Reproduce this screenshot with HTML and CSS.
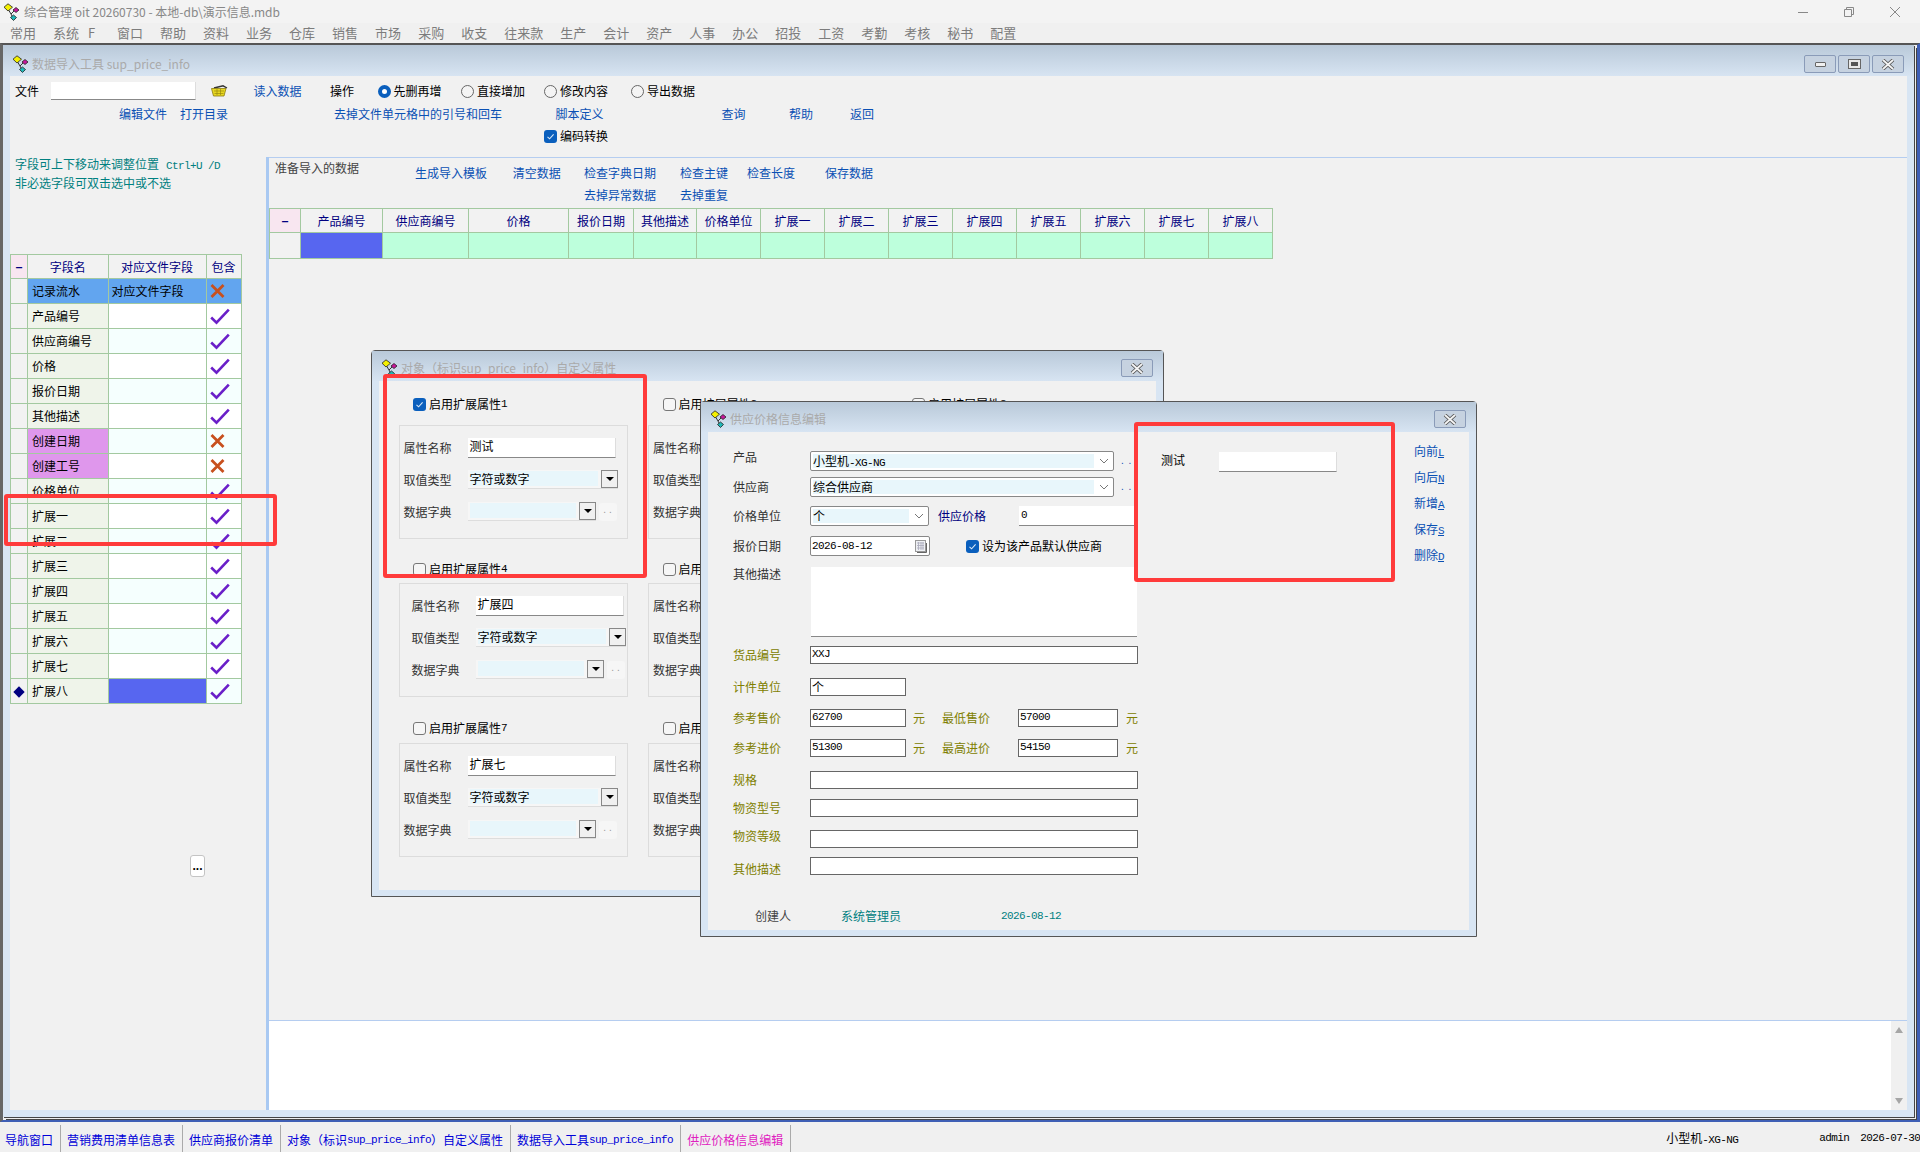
FILE: index.html
```html
<!DOCTYPE html>
<html lang="zh-CN">
<head>
  <meta charset="UTF-8" />
  <title>综合管理 oit 20260730</title>
  <link rel="stylesheet" href="styles.css">
</head>
<body>
<svg class="defs" width="0" height="0">
  <symbol id="app" viewBox="0 0 17 18">
    <path d="M5 6 L8 11 M12 7 L8 11 L10 15" fill="none" stroke="#333" stroke-width="1"/>
    <path d="M5 0.8 L9.5 4.2 L5 8 L1 4.2 Z" fill="#f5f000" stroke="#222" stroke-width="0.8"/>
    <path d="M13 4.5 L16 7 L13 9.5 L10 7 Z" fill="#c8189c" stroke="#222" stroke-width="0.8"/>
    <path d="M10.5 12 L13.5 14.5 L10.5 17.5 L7.5 14.5 Z" fill="#20b8b8" stroke="#222" stroke-width="0.8"/>
  </symbol>
  <symbol id="yes" viewBox="0 0 20 17">
    <path d="M1.2 9.5 L6.5 14.6 L18.8 1.6" fill="none" stroke="#6a1fc8" stroke-width="2.6"/>
  </symbol>
  <symbol id="no" viewBox="0 0 15 14">
    <path d="M1.5 1 L13.5 13 M13.5 1 L1.5 13" fill="none" stroke="#c8501e" stroke-width="2.8"/>
  </symbol>
  <symbol id="tick" viewBox="0 0 13 13">
    <rect width="13" height="13" rx="3" fill="#0a5fbd"/>
    <path d="M3.5 6.8 L5.6 8.8 L9.6 4.4" fill="none" stroke="#d8e8f8" stroke-width="1.1"/>
  </symbol>
  <symbol id="chev" viewBox="0 0 10 6">
    <path d="M1 1 L5 5 L9 1" fill="none" stroke="#777" stroke-width="1"/>
  </symbol>
  <symbol id="close" viewBox="0 0 14 11">
    <path d="M2 1 L12 10 M12 1 L2 10" fill="none" stroke="#555" stroke-width="3.6"/>
    <path d="M2 1 L12 10 M12 1 L2 10" fill="none" stroke="#f4f4f4" stroke-width="1.8"/>
  </symbol>
</svg>

<div class="app">
  <div class="titlebar">
    <svg class="app-icon"><use href="#app"/></svg>
    <span class="title-text">综合管理 oit 20260730 - 本地-db\演示信息.mdb</span>
    <div class="sys-btns">
      <svg width="12" height="12"><path d="M1 6.5 H11" stroke="#888" fill="none"/></svg>
      <svg width="12" height="12"><path d="M1.5 3.5 H8.5 V10.5 H1.5 Z M3.5 3 V1.5 H10.5 V8.5 H9" stroke="#888" fill="none"/></svg>
      <svg width="12" height="12"><path d="M1 1 L11 11 M11 1 L1 11" stroke="#888" fill="none"/></svg>
    </div>
  </div>

  <div class="menubar">
    <span>常用</span><span class="menu-wide">系统<i>F</i></span><span>窗口</span><span>帮助</span><span>资料</span><span>业务</span><span>仓库</span><span>销售</span><span>市场</span><span>采购</span><span>收支</span><span>往来款</span><span>生产</span><span>会计</span><span>资产</span><span>人事</span><span>办公</span><span>招投</span><span>工资</span><span>考勤</span><span>考核</span><span>秘书</span><span>配置</span>
  </div>

  <div class="mdi">
    <div class="main-win">
      <div class="win-title">
        <svg class="win-icon"><use href="#app"/></svg>
        <span class="win-name">数据导入工具 sup_price_info</span>
        <div class="win-btns">
          <span class="win-btn"><i class="g-min"></i></span>
          <span class="win-btn"><i class="g-max"></i></span>
          <span class="win-btn"><svg width="14" height="11"><use href="#close"/></svg></span>
        </div>
      </div>

      <div class="main-body">
        <div class="toolbar">
          <div class="tool-row row-file">
            <span>文件</span>
            <span class="input file-input"></span>
            <svg class="basket" width="17" height="12" viewBox="0 0 17 12">
              <path d="M3 3 L12 0.8 L16 3" fill="none" stroke="#333" stroke-width="1.4"/>
              <path d="M0.5 3.5 H15 L13 11 H2.5 Z" fill="#e8d820" stroke="#8a7a10" stroke-width="0.8"/>
              <path d="M3 6 H13 M3.5 8.5 H12.5 M6 4 V10 M9.500 4 V10" stroke="#9a8a10" stroke-width="0.7"/>
            </svg>
            <a class="link">读入数据</a>
            <span>操作</span>
            <label class="opt"><i class="radio on"></i>先删再增</label>
            <label class="opt"><i class="radio"></i>直接增加</label>
            <label class="opt"><i class="radio"></i>修改内容</label>
            <label class="opt"><i class="radio"></i>导出数据</label>
          </div>
          <div class="tool-row row-links">
            <a class="link">编辑文件</a>
            <a class="link">打开目录</a>
            <a class="link">去掉文件单元格中的引号和回车</a>
            <a class="link">脚本定义</a>
            <a class="link">查询</a>
            <a class="link">帮助</a>
            <a class="link">返回</a>
          </div>
          <div class="tool-row row-code">
            <label class="opt"><svg class="cb"><use href="#tick"/></svg>编码转换</label>
          </div>
        </div>

        <div class="panes">
          <div class="left-pane">
            <p class="note">字段可上下移动来调整位置<span class="en note-keys">Ctrl+U /D</span></p>
            <p class="note">非必选字段可双击选中或不选</p>
            <table class="grid field-grid">
              <tr class="head"><th class="corner">−</th><th>字段名</th><th>对应文件字段</th><th>包含</th></tr>
              <tr class="sel"><td class="mark"></td><td class="name">记录流水</td><td>对应文件字段</td><td class="flag"><svg width="15" height="14"><use href="#no"/></svg></td></tr>
              <tr><td class="mark"></td><td class="name">产品编号</td><td></td><td class="flag"><svg width="20" height="17"><use href="#yes"/></svg></td></tr>
              <tr class="alt"><td class="mark"></td><td class="name">供应商编号</td><td></td><td class="flag"><svg width="20" height="17"><use href="#yes"/></svg></td></tr>
              <tr><td class="mark"></td><td class="name">价格</td><td></td><td class="flag"><svg width="20" height="17"><use href="#yes"/></svg></td></tr>
              <tr class="alt"><td class="mark"></td><td class="name">报价日期</td><td></td><td class="flag"><svg width="20" height="17"><use href="#yes"/></svg></td></tr>
              <tr><td class="mark"></td><td class="name">其他描述</td><td></td><td class="flag"><svg width="20" height="17"><use href="#yes"/></svg></td></tr>
              <tr class="alt"><td class="mark"></td><td class="name sys">创建日期</td><td></td><td class="flag"><svg width="15" height="14"><use href="#no"/></svg></td></tr>
              <tr><td class="mark"></td><td class="name sys">创建工号</td><td></td><td class="flag"><svg width="15" height="14"><use href="#no"/></svg></td></tr>
              <tr class="alt"><td class="mark"></td><td class="name">价格单位</td><td></td><td class="flag"><svg width="20" height="17"><use href="#yes"/></svg></td></tr>
              <tr><td class="mark"></td><td class="name">扩展一</td><td></td><td class="flag"><svg width="20" height="17"><use href="#yes"/></svg></td></tr>
              <tr class="alt"><td class="mark"></td><td class="name">扩展二</td><td></td><td class="flag"><svg width="20" height="17"><use href="#yes"/></svg></td></tr>
              <tr><td class="mark"></td><td class="name">扩展三</td><td></td><td class="flag"><svg width="20" height="17"><use href="#yes"/></svg></td></tr>
              <tr class="alt"><td class="mark"></td><td class="name">扩展四</td><td></td><td class="flag"><svg width="20" height="17"><use href="#yes"/></svg></td></tr>
              <tr><td class="mark"></td><td class="name">扩展五</td><td></td><td class="flag"><svg width="20" height="17"><use href="#yes"/></svg></td></tr>
              <tr class="alt"><td class="mark"></td><td class="name">扩展六</td><td></td><td class="flag"><svg width="20" height="17"><use href="#yes"/></svg></td></tr>
              <tr><td class="mark"></td><td class="name">扩展七</td><td></td><td class="flag"><svg width="20" height="17"><use href="#yes"/></svg></td></tr>
              <tr class="alt"><td class="mark"><i class="diamond"></i></td><td class="name">扩展八</td><td class="cur"></td><td class="flag"><svg width="20" height="17"><use href="#yes"/></svg></td></tr>
            </table>
            <button class="more-btn">...</button>
          </div>

          <div class="right-pane">
            <div class="import-area">
              <div class="import-head">
                <span class="import-title">准备导入的数据</span>
                <div class="import-links">
                  <a class="link">生成导入模板</a>
                  <a class="link">清空数据</a>
                  <a class="link">检查字典日期</a>
                  <a class="link">检查主键</a>
                  <a class="link">检查长度</a>
                  <a class="link">保存数据</a>
                  <span></span><span></span>
                  <a class="link">去掉异常数据</a>
                  <a class="link">去掉重复</a>
                </div>
              </div>
              <table class="grid data-grid">
                <tr class="head"><th class="corner">−</th><th>产品编号</th><th>供应商编号</th><th>价格</th><th>报价日期</th><th>其他描述</th><th>价格单位</th><th>扩展一</th><th>扩展二</th><th>扩展三</th><th>扩展四</th><th>扩展五</th><th>扩展六</th><th>扩展七</th><th>扩展八</th></tr>
                <tr class="new-row"><td class="mark"></td><td class="cur"></td><td></td><td></td><td></td><td></td><td></td><td></td><td></td><td></td><td></td><td></td><td></td><td></td><td></td></tr>
              </table>
            </div>
            <div class="log-box">
              <div class="scrollbar"><i class="sb-up"></i><i class="sb-down"></i></div>
            </div>
          </div>
        </div>
      </div>
    </div>
  </div>

  <div class="taskbar">
    <span class="task">导航窗口</span>
    <span class="task">营销费用清单信息表</span>
    <span class="task">供应商报价清单</span>
    <span class="task">对象（标识<span class="en">sup_price_info</span>）自定义属性</span>
    <span class="task">数据导入工具<span class="en">sup_price_info</span></span>
    <span class="task task-on">供应价格信息编辑</span>
    <span class="status status-host">小型机<span class="en">-XG-NG</span></span>
    <span class="status en status-user">admin</span>
    <span class="status en status-date">2026-07-30</span>
  </div>

  <!-- 自定义属性窗口 -->
  <div class="win attr-win">
    <div class="win-title">
      <svg class="win-icon"><use href="#app"/></svg>
      <span class="win-name">对象（标识sup_price_info）自定义属性</span>
      <div class="win-btns"><span class="win-btn"><svg width="14" height="11"><use href="#close"/></svg></span></div>
    </div>
    <div class="attr-body">
      <div class="attr r1">
        <label class="attr-check"><svg class="cb"><use href="#tick"/></svg>启用扩展属性<span class="en">1</span></label>
        <div class="attr-box">
          <div class="attr-line"><span class="attr-label">属性名称</span><span class="input attr-input">测试</span></div>
          <div class="attr-line"><span class="attr-label">取值类型</span><span class="drop drop-long"><b>字符或数字</b><i class="arrow"></i></span></div>
          <div class="attr-line"><span class="attr-label">数据字典</span><span class="drop drop-short"><b></b><i class="arrow"></i></span><span class="dots">. .</span></div>
        </div>
      </div>
      <div class="attr r1">
        <label class="attr-check"><i class="cb-off"></i>启用扩展属性<span class="en">2</span></label>
        <div class="attr-box">
          <div class="attr-line"><span class="attr-label">属性名称</span><span class="input attr-input">扩展二</span></div>
          <div class="attr-line"><span class="attr-label">取值类型</span><span class="drop drop-long"><b>字符或数字</b><i class="arrow"></i></span></div>
          <div class="attr-line"><span class="attr-label">数据字典</span><span class="drop drop-short"><b></b><i class="arrow"></i></span><span class="dots">. .</span></div>
        </div>
      </div>
      <div class="attr r1">
        <label class="attr-check"><i class="cb-off"></i>启用扩展属性<span class="en">3</span></label>
      </div>
      <div class="attr r2">
        <label class="attr-check"><i class="cb-off"></i>启用扩展属性<span class="en">4</span></label>
        <div class="attr-box attr-shift">
          <div class="attr-line"><span class="attr-label">属性名称</span><span class="input attr-input">扩展四</span></div>
          <div class="attr-line"><span class="attr-label">取值类型</span><span class="drop drop-long"><b>字符或数字</b><i class="arrow"></i></span></div>
          <div class="attr-line"><span class="attr-label">数据字典</span><span class="drop drop-short"><b></b><i class="arrow"></i></span><span class="dots">. .</span></div>
        </div>
      </div>
      <div class="attr r2">
        <label class="attr-check"><i class="cb-off"></i>启用扩展属性<span class="en">5</span></label>
        <div class="attr-box">
          <div class="attr-line"><span class="attr-label">属性名称</span><span class="input attr-input">扩展五</span></div>
          <div class="attr-line"><span class="attr-label">取值类型</span><span class="drop drop-long"><b>字符或数字</b><i class="arrow"></i></span></div>
          <div class="attr-line"><span class="attr-label">数据字典</span><span class="drop drop-short"><b></b><i class="arrow"></i></span><span class="dots">. .</span></div>
        </div>
      </div>
      <div class="attr r2"></div>
      <div class="attr r3">
        <label class="attr-check"><i class="cb-off"></i>启用扩展属性<span class="en">7</span></label>
        <div class="attr-box">
          <div class="attr-line"><span class="attr-label">属性名称</span><span class="input attr-input">扩展七</span></div>
          <div class="attr-line"><span class="attr-label">取值类型</span><span class="drop drop-long"><b>字符或数字</b><i class="arrow"></i></span></div>
          <div class="attr-line"><span class="attr-label">数据字典</span><span class="drop drop-short"><b></b><i class="arrow"></i></span><span class="dots">. .</span></div>
        </div>
      </div>
      <div class="attr r3">
        <label class="attr-check"><i class="cb-off"></i>启用扩展属性<span class="en">8</span></label>
        <div class="attr-box">
          <div class="attr-line"><span class="attr-label">属性名称</span><span class="input attr-input">扩展八</span></div>
          <div class="attr-line"><span class="attr-label">取值类型</span><span class="drop drop-long"><b>字符或数字</b><i class="arrow"></i></span></div>
          <div class="attr-line"><span class="attr-label">数据字典</span><span class="drop drop-short"><b></b><i class="arrow"></i></span><span class="dots">. .</span></div>
        </div>
      </div>
    </div>
  </div>

  <!-- 供应价格信息编辑窗口 -->
  <div class="win edit-win">
    <div class="win-title">
      <svg class="win-icon"><use href="#app"/></svg>
      <span class="win-name">供应价格信息编辑</span>
      <div class="win-btns"><span class="win-btn"><svg width="14" height="11"><use href="#close"/></svg></span></div>
    </div>
    <div class="edit-body">
      <div class="edit-form">
        <div class="f-row">
          <span class="f-label lift">产品</span>
          <span class="pick pick-long"><b>小型机<span class="en">-XG-NG</span></b><svg width="10" height="6"><use href="#chev"/></svg></span>
          <span class="more-dots">. .</span>
        </div>
        <div class="f-row mt6">
          <span class="f-label">供应商</span>
          <span class="pick pick-long"><b>综合供应商</b><svg width="10" height="6"><use href="#chev"/></svg></span>
          <span class="more-dots">. .</span>
        </div>
        <div class="f-row mt9">
          <span class="f-label">价格单位</span>
          <span class="pick pick-unit"><b>个</b><svg width="10" height="6"><use href="#chev"/></svg></span>
          <span class="navy price-label">供应价格</span>
          <span class="input price-input en">0</span>
        </div>
        <div class="f-row mt10">
          <span class="f-label">报价日期</span>
          <span class="date-box en">2026-08-12
            <svg width="12" height="13" viewBox="0 0 12 13"><rect x="0.5" y="0.5" width="10" height="11" fill="#eef0f4" stroke="#999"/><path d="M2 3 H9 M2 5.500 H9 M2 8 H9 M3.500 2 V10 M6 2 V10 M8 2 V10" stroke="#aab" stroke-width="0.8"/><path d="M11.500 3 V12.500 H2" fill="none" stroke="#666"/></svg>
          </span>
          <label class="opt default-opt"><svg class="cb"><use href="#tick"/></svg>设为该产品默认供应商</label>
        </div>
        <div class="f-row f-top mt11">
          <span class="f-label">其他描述</span>
          <span class="memo"></span>
        </div>
        <div class="f-row olive mt9">
          <span class="f-label">货品编号</span><span class="box box-full en">XXJ</span>
        </div>
        <div class="f-row olive mt14">
          <span class="f-label">计件单位</span><span class="box box-half">个</span>
        </div>
        <div class="f-row olive mt13">
          <span class="f-label">参考售价</span><span class="box box-half en">62700</span>
          <span class="yuan">元</span><span class="f-label2">最低售价</span>
          <span class="box box-price en">57000</span><span class="yuan2">元</span>
        </div>
        <div class="f-row olive mt12">
          <span class="f-label">参考进价</span><span class="box box-half en">51300</span>
          <span class="yuan">元</span><span class="f-label2">最高进价</span>
          <span class="box box-price en">54150</span><span class="yuan2">元</span>
        </div>
        <div class="f-row olive mt14">
          <span class="f-label">规格</span><span class="box box-full"></span>
        </div>
        <div class="f-row olive mt10">
          <span class="f-label">物资型号</span><span class="box box-full"></span>
        </div>
        <div class="f-row olive mt13">
          <span class="f-label lift-small">物资等级</span><span class="box box-full"></span>
        </div>
        <div class="f-row olive mt9">
          <span class="f-label sink">其他描述</span><span class="box box-full"></span>
        </div>
        <div class="creator-row">
          <span class="creator-label">创建人</span>
          <span class="teal creator-name">系统管理员</span>
          <span class="teal en">2026-08-12</span>
        </div>
      </div>
      <div class="custom-fields">
        <span class="custom-label">测试</span>
        <span class="input custom-input"></span>
      </div>
      <div class="nav-links">
        <a class="link">向前<u class="en">L</u></a>
        <a class="link">向后<u class="en">N</u></a>
        <a class="link">新增<u class="en">A</u></a>
        <a class="link">保存<u class="en">S</u></a>
        <a class="link">删除<u class="en">D</u></a>
      </div>
    </div>
  </div>

  <div class="mark-box mark-field"></div>
  <div class="mark-box mark-attr"></div>
  <div class="mark-box mark-custom"></div>
</div>
</body>
</html>
```

FILE: styles.css
```css
* {
  box-sizing: border-box;
}
html, body {
  margin: 0;
  padding: 0;
}
body {
  font-family: "Noto Sans CJK SC", "Liberation Sans", sans-serif;
  font-size: 12px;
  line-height: 14px;
  color: #000;
  background: #f0f0f0;
}
.defs {
  position: absolute;
}
.en {
  font-family: "Liberation Mono", "Noto Sans CJK SC", monospace;
  font-size: 11px;
  letter-spacing: -0.6px;
}
i, b {
  font-style: normal;
  font-weight: normal;
}
a.link {
  color: #0a50b4;
  white-space: nowrap;
}
.navy { color: #000080; }
.teal { color: #008080; }
.olive { color: #808000; }

.app {
  position: relative;
  width: 1920px;
  height: 1152px;
  overflow: hidden;
  display: flex;
  flex-direction: column;
}

/* title + menu */
.titlebar {
  height: 23px;
  background: #f3f3f3;
  display: flex;
  align-items: center;
  padding-left: 3px;
  color: #888;
}
.app-icon {
  width: 17px;
  height: 18px;
  margin-right: 4px;
}
.title-text {
  font-size: 12px;
}
.sys-btns {
  margin-left: auto;
  display: flex;
  gap: 34px;
  padding-right: 19px;
}
.menubar {
  height: 20px;
  background: #f0f0f0;
  display: flex;
  gap: 17px;
  align-items: center;
  padding-left: 10px;
  font-size: 13px;
  color: #7c7c7c;
}
.menu-wide {
  width: 47px;
}
.menu-wide i {
  margin-left: 9px;
}

/* mdi area */
.mdi {
  height: 79px;
  flex: 1;
  border-top: 2px solid #555;
  border-left: 3px solid #666;
  border-right: 3px solid #3f5fb5;
  border-bottom: 2px solid #3f5fb5;
  display: flex;
}
.main-win {
  flex: 1;
  display: flex;
  flex-direction: column;
  background: #d8e5f3;
  padding: 0 7px 7px 7px;
  margin: 0 3px 3px 0;
  box-shadow: 1px 1px 0 #444, 2px 2px 0 #eee, 3px 3px 0 #444;
}
.main-body {
  flex: 1;
  display: flex;
  flex-direction: column;
  background: #f1f1f1;
}
.win-title {
  height: 31px;
  margin: 0 -7px;
  background: linear-gradient(#b9c9d9, #d7e4f2);
  display: flex;
  align-items: center;
  padding: 7px 0 0 9px;
  color: #aaa;
  flex: none;
}
.win .win-title {
  height: 30px;
  padding-top: 4px;
}
.win-icon {
  width: 17px;
  height: 18px;
  margin-right: 3px;
}
.win-btns {
  margin-left: auto;
  display: flex;
  gap: 2px;
  padding-right: 10px;
}
.win-btn {
  width: 32px;
  height: 18px;
  border: 1px solid #8a9bb8;
  border-radius: 2px;
  background: #c6d2e0;
  display: flex;
  align-items: center;
  justify-content: center;
}
.g-min {
  width: 11px;
  height: 5px;
  background: #f0f0f0;
  border: 1px solid #666;
  border-radius: 1px;
}
.g-max {
  width: 11px;
  height: 8px;
  background: #555;
  border: 2px solid #e8e8e8;
  outline: 1px solid #666;
}

/* toolbar */
.toolbar {
  height: 81px;
  flex: none;
  padding-left: 5px;
}
.tool-row {
  display: grid;
  align-items: center;
}
.row-file {
  margin-top: 6px;
  height: 18px;
  grid-template-columns: 36px 145px 57.5px 76.5px 47.5px 83.5px 83px 87px auto;
}
.file-input {
  height: 18px;
}
.basket {
  margin-left: 15px;
}
.row-links {
  margin-top: 5px;
  height: 18px;
  margin-left: 104px;
  grid-template-columns: 61px 154px 221.500px 166px 67.400px 61px auto;
}
.row-code {
  margin-top: 5px;
  height: 16px;
  margin-left: 529px;
}
.opt {
  display: flex;
  align-items: center;
  gap: 3px;
  white-space: nowrap;
}
.radio {
  width: 13px;
  height: 13px;
  border-radius: 50%;
  border: 1px solid #666;
  background: #f4f4f4;
}
.radio.on {
  border: 4px solid #0a5fbd;
  background: #fff;
}
.cb {
  width: 13px;
  height: 13px;
  flex: none;
}
.cb-off {
  width: 13px;
  height: 13px;
  flex: none;
  border: 1px solid #777;
  border-radius: 3px;
  background: #f6f6f6;
}
.input {
  display: block;
  background: #fff;
  border-bottom: 1px solid #888;
  border-right: 1px solid #ddd;
  white-space: nowrap;
}

/* panes */
.panes {
  flex: 1;
  display: flex;
  min-height: 0;
}
.left-pane {
  width: 256px;
  flex: none;
}
.note {
  margin: 0 0 2px 5px;
  height: 17px;
  color: #008080;
}
.note-keys {
  margin-left: 7px;
}
.grid {
  border-collapse: collapse;
  table-layout: fixed;
}
.grid th, .grid td {
  border: 1px solid #a3c9a0;
  padding: 0;
  height: 25px;
  font-weight: normal;
}
.grid th {
  color: #000080;
  background: #f2f2f2;
  text-align: center;
  height: 24px;
}
.grid th.corner {
  background: #f8e6f0;
  font-weight: bold;
}
.field-grid {
  margin-top: 61px;
  width: 230.500px;
}
.field-grid th:nth-child(1) { width: 17px; }
.field-grid th:nth-child(2) { width: 80.500px; }
.field-grid th:nth-child(3) { width: 98px; }
.field-grid th:nth-child(4) { width: 35px; }
.field-grid td {
  background: #fff;
  padding-left: 3px;
}
.field-grid tr.alt td {
  background: #f5fffe;
}
.grid td.mark, .field-grid tr.alt td.mark {
  background: #f2f2f2;
  padding: 0;
  text-align: center;
}
.field-grid td.name, .field-grid tr.alt td.name {
  background: #eff4ea;
  padding-left: 4px;
}
.field-grid td.name.sys, .field-grid tr.alt td.name.sys {
  background: #df97ec;
}
.field-grid tr.sel td, .field-grid tr.sel td.name {
  background: #62a5ef;
}
.field-grid tr.sel td.mark {
  background: #f2f2f2;
}
.grid td.cur, .field-grid tr.alt td.cur {
  background: #5766f0;
}
.field-grid td.flag, .field-grid tr.alt td.flag, .field-grid tr.sel td.flag {
  padding: 0 0 0 3px;
  text-align: left;
  line-height: 0;
}
.flag svg {
  vertical-align: middle;
}
.diamond {
  display: inline-block;
  width: 8px;
  height: 8px;
  background: #000080;
  transform: rotate(45deg);
}
.more-btn {
  display: block;
  margin: 151px 0 0 180px;
  width: 15px;
  height: 22px;
  padding: 0;
  border: 1px solid #c4c4c4;
  border-radius: 3px;
  background: #fff;
  font-family: "Liberation Sans", sans-serif;
  font-size: 12px;
  font-weight: bold;
  line-height: 12px;
}

.right-pane {
  flex: 1;
  display: flex;
  flex-direction: column;
  margin-top: 0;
  border-left: 3px solid #a9c9f2;
  min-width: 0;
}
.import-area {
  flex: 1;
  border-top: 1px solid #b5cdf0;
  border-bottom: 1px solid #b5cdf0;
}
.import-head {
  height: 50px;
  display: flex;
  padding-left: 6px;
}
.import-title {
  width: 140px;
  flex: none;
  color: #444;
  padding-top: 3px;
}
.import-links {
  display: grid;
  grid-template-columns: 97.700px 71.300px 96px 67px 78px auto;
  grid-auto-rows: 22px;
  align-items: center;
  margin-top: 4px;
}
.data-grid {
  width: 1003px;
}
.data-grid th:nth-child(1) { width: 31px; }
.data-grid th:nth-child(2) { width: 82px; }
.data-grid th:nth-child(3) { width: 86px; }
.data-grid th:nth-child(4) { width: 100px; }
.data-grid th:nth-child(5) { width: 65px; }
.data-grid th:nth-child(6) { width: 63px; }
.data-grid th:nth-child(n+7) { width: 64px; }
.data-grid td {
  background: #bdffdc;
  height: 26px;
}
.data-grid td.mark {
  background: #f2f2f2;
}
.log-box {
  height: 89px;
  flex: none;
  background: #fff;
  display: flex;
  justify-content: flex-end;
}
.scrollbar {
  width: 16px;
  background: #f0f0f0;
  display: flex;
  flex-direction: column;
  justify-content: space-between;
  align-items: center;
  padding: 6px 0;
}
.sb-up {
  width: 8px;
  border: solid transparent;
  border-width: 0 4px 6px;
  border-bottom-color: #a6a6a6;
}
.sb-down {
  width: 8px;
  border: solid transparent;
  border-width: 6px 4px 0;
  border-top-color: #a6a6a6;
}

/* taskbar */
.taskbar {
  height: 30px;
  flex: none;
  display: flex;
  align-items: flex-end;
  color: #0000d8;
}
.task {
  height: 27px;
  padding: 3px 7px 0 6px;
  border-right: 1px solid #aaa;
  white-space: nowrap;
  display: flex;
  align-items: center;
}
.task:first-child {
  padding-left: 5px;
}
.task-on {
  color: #e020c0;
}
.status {
  height: 27px;
  padding-top: 6px;
  color: #000;
  white-space: nowrap;
}
.status-host {
  margin-left: 875px;
}
.status-user {
  margin-left: 81px;
}
.status-date {
  margin-left: 11px;
}

/* floating windows */
.win {
  position: absolute;
  display: flex;
  flex-direction: column;
  background: #d8e5f3;
  border: 1px solid #555;
  border-radius: 4px 4px 0 0;
  padding: 0 7px 6px 7px;
}
.attr-win {
  left: 371px;
  top: 350px;
  width: 793px;
  height: 547px;
}
.edit-win {
  left: 700px;
  top: 401px;
  width: 777px;
  height: 536px;
}

.attr-body {
  flex: 1;
  min-height: 0;
  background: #f1f1f1;
  padding: 16px 0 0 19.500px;
  display: grid;
  grid-template-columns: repeat(3, 249.500px);
  grid-template-rows: 142px 135px 137px;
  row-gap: 23px;
}
.attr-check {
  display: flex;
  align-items: center;
  height: 14px;
  margin-left: 14.500px;
  white-space: nowrap;
}
.attr-check .cb, .attr-check .cb-off {
  margin-right: 3px;
}
.r1 .attr-check { margin-bottom: 14px; }
.r2 .attr-check { margin-bottom: 7px; }
.r3 { padding-top: 1px; }
.r3 .attr-check { margin-bottom: 8px; }
.attr-box {
  width: 229px;
  height: 114px;
  border: 1px solid #dcdcdc;
  padding: 12px 0 0 4px;
  display: flex;
  flex-direction: column;
  gap: 13px;
}
.attr-shift {
  padding-left: 12px;
}
.attr-line {
  display: flex;
  align-items: center;
  height: 19px;
}
.attr-label {
  width: 64px;
  flex: none;
  color: #333;
  white-space: nowrap;
}
.attr-input {
  width: 148px;
  height: 20px;
  padding: 1px 2px;
}
.drop {
  display: flex;
  height: 19px;
  background: #f6f6f6;
  border-bottom: 1px solid #ddd;
}
.drop b {
  flex: 1;
  background: #e8f6fb;
  margin: 1px 3px 2px 2px;
  line-height: 15px;
}
.drop-long {
  width: 150px;
}
.drop-short {
  width: 128px;
}
.arrow {
  position: relative;
  width: 17px;
  flex: none;
  border: 1px solid #888;
  background: #f0f0f0;
}
.arrow::after {
  content: "";
  position: absolute;
  left: 4px;
  top: 6px;
  border: solid transparent;
  border-width: 4px 4px 0;
  border-top-color: #000;
}
.dots {
  width: 18px;
  height: 18px;
  margin-left: 3px;
  border-radius: 3px;
  background: #f6f6f6;
  color: #999;
  font-family: "Liberation Sans", sans-serif;
  font-size: 10px;
  text-align: center;
}

.edit-body {
  flex: 1;
  min-height: 0;
  background: #f1f1f1;
  display: flex;
  margin-right: 0;
}
.edit-form {
  width: 405px;
  margin-left: 25px;
  padding-top: 19px;
  flex: none;
}
.f-row {
  display: flex;
  align-items: center;
  white-space: nowrap;
}
.f-top {
  align-items: flex-start;
}
.f-label {
  width: 77px;
  flex: none;
  color: #333;
}
.olive .f-label, .f-label2 {
  color: #808000;
}
.f-label.lift {
  margin-top: -9px;
}
.f-label.lift-small {
  margin-top: -6px;
}
.f-label.sink {
  margin-bottom: -6px;
}
.mt6 { margin-top: 6px; }
.mt9 { margin-top: 9px; }
.mt10 { margin-top: 10px; }
.mt11 { margin-top: 11px; }
.mt12 { margin-top: 12px; }
.mt13 { margin-top: 13px; }
.mt14 { margin-top: 14px; }
.pick {
  display: flex;
  align-items: center;
  height: 20px;
  border: 1px solid #888;
  border-radius: 2px;
  background: #fff;
  padding: 2px 4px 2px 2px;
}
.pick b {
  flex: 1;
  height: 14px;
  background: #e8f6fb;
  margin-right: 5px;
}
.pick-long {
  width: 304px;
}
.pick-unit {
  width: 119px;
}
.more-dots {
  margin-left: 7px;
  color: #0a50b4;
  font-family: "Liberation Sans", sans-serif;
  font-size: 10px;
  letter-spacing: 1px;
}
.price-label {
  width: 81px;
  margin-left: 9px;
}
.price-input {
  width: 119px;
  height: 20px;
  padding: 2px 2px;
}
.date-box {
  width: 120px;
  height: 20px;
  border: 1px solid #888;
  border-radius: 2px;
  background: #fff;
  display: flex;
  align-items: center;
  justify-content: space-between;
  padding: 0 2px 0 1px;
}
.default-opt {
  margin-left: 36px;
}
.memo {
  display: block;
  width: 326px;
  height: 70px;
  margin-left: 1px;
  background: #fff;
  border-bottom: 1px solid #888;
}
.box {
  display: block;
  height: 18px;
  border: 1px solid #666;
  background: #fff;
  color: #000;
  padding-left: 1px;
  line-height: 15px;
}
.box-full {
  width: 328px;
}
.box-half {
  width: 96px;
}
.box-price {
  width: 100px;
}
.yuan {
  width: 29px;
  margin-left: 7px;
  flex: none;
}
.f-label2 {
  width: 76px;
  flex: none;
}
.yuan2 {
  margin-left: 8px;
}
.creator-row {
  display: flex;
  margin-top: 34px;
  height: 14px;
  padding-left: 22px;
}
.creator-label {
  width: 86px;
  color: #444;
}
.creator-name {
  width: 160px;
}
.custom-fields {
  display: flex;
  align-items: flex-start;
  margin-left: 23px;
  padding-top: 20px;
  flex: none;
}
.custom-label {
  width: 58px;
  padding-top: 1px;
}
.custom-input {
  width: 118px;
  height: 20px;
}
.nav-links {
  margin-left: 77px;
  padding-top: 7px;
  display: grid;
  grid-auto-rows: 26px;
  align-items: center;
  align-content: start;
}

/* red callouts drawn over the shot */
.mark-box {
  position: absolute;
  border: 4px solid #ff3b3b;
  border-radius: 3px;
}
.mark-field {
  left: 4px;
  top: 494px;
  width: 273px;
  height: 52px;
}
.mark-attr {
  left: 383px;
  top: 374px;
  width: 264px;
  height: 204px;
}
.mark-custom {
  left: 1134px;
  top: 422px;
  width: 261px;
  height: 160px;
}
```
